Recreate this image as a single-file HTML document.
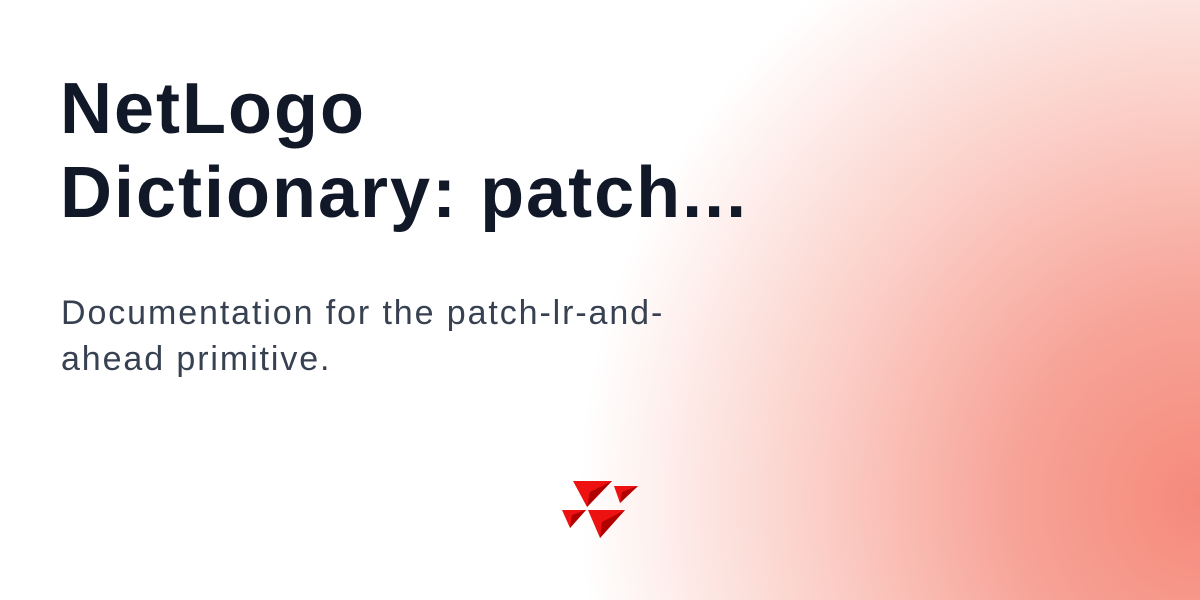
<!DOCTYPE html>
<html><head><style>
html,body{margin:0;padding:0}
body{width:1200px;height:600px;overflow:hidden;position:relative;background:#fff;font-family:"Liberation Sans",sans-serif}
.bg{position:absolute;inset:0;background:radial-gradient(ellipse 620px 640px at 1200px 500px,#f58a7c 0%,#f7a397 30%,#fbcfc8 62%,#fff 100%)}
h1{position:absolute;left:60px;top:67px;margin:0;font-size:72px;line-height:84px;font-weight:700;color:#111827;letter-spacing:2px;white-space:nowrap}
p{position:absolute;left:61px;top:290px;margin:0;font-size:34px;line-height:46px;color:#374151;letter-spacing:1.9px;white-space:nowrap}
svg{position:absolute;left:0;top:0}
</style></head><body>
<div class="bg"></div>
<h1>NetLogo<br>Dictionary: patch...</h1>
<p>Documentation for the patch-lr-and-<br>ahead primitive.</p>
<svg width="1200" height="600">
<g>
<polygon points="573,481 612,481 587,507" fill="#ee1111"/><polygon points="612,481 587,507 590,492" fill="#b00000"/>
<polygon points="614,486 638,486 620,503" fill="#ee1111"/><polygon points="638,486 620,503 622,492" fill="#b00000"/>
<polygon points="562,510 586,510 570,528" fill="#ee1111"/><polygon points="586,510 570,528 572,515" fill="#b00000"/>
<polygon points="588,510 625,510 600,538" fill="#ee1111"/><polygon points="625,510 600,538 602,522" fill="#b00000"/>
</g>
</svg>
</body></html>
